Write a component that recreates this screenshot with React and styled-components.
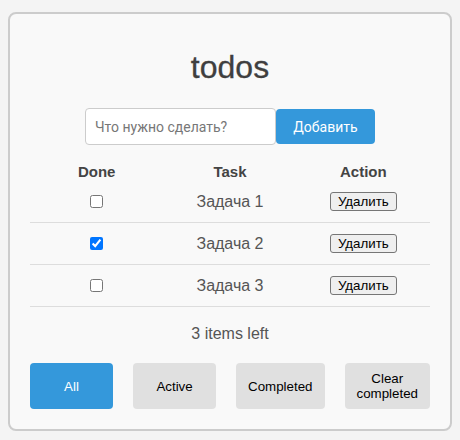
import React, { useState } from "react";
import styled, { createGlobalStyle } from "styled-components";

const Global = createGlobalStyle`
  html, body { margin: 0; padding: 0; background: #f4f4f4; }
  body { font-family: "Liberation Sans", Arial, sans-serif; }
`;

const Card = styled.div`
  box-sizing: border-box;
  width: 444px;
  margin: 12px auto 0;
  padding: 20px;
  background: #f9f9f9;
  border: 2px solid #cccccc;
  border-radius: 8px;
  display: flex;
  flex-direction: column;
`;

const Title = styled.h1`
  margin: 15px 0 0;
  font-size: 32px;
  line-height: 37px;
  font-weight: normal;
  color: #3f3f3f;
  text-align: center;
  -webkit-text-stroke: 0.3px #3f3f3f;
`;

const Form = styled.form`
  margin-top: 22px;
  display: flex;
  justify-content: center;
  align-items: center;
`;

const Input = styled.input`
  box-sizing: border-box;
  width: 191px;
  height: 37px;
  padding: 0 9px;
  border: 1px solid #cccccc;
  border-radius: 4px;
  background: #fff;
  font-family: Roboto, sans-serif;
  font-size: 14px;
  color: #333;
  outline: none;
  &::placeholder { color: #777; }
`;

const AddButton = styled.button`
  box-sizing: border-box;
  height: 35px;
  width: 99px;
  padding: 0;
  border: none;
  border-radius: 4px;
  background: #3498db;
  color: #fff;
  font-family: Roboto, sans-serif;
  font-size: 14px;
`;

const Table = styled.div`
  margin-top: 16px;
  display: grid;
  grid-template-columns: repeat(3, 1fr);
`;

const Head = styled.div`
  height: 20px;
  display: flex;
  align-items: center;
  justify-content: center;
  font-size: 15px;
  font-weight: bold;
  color: #444;
`;

const Cell = styled.div`
  height: 41px;
  border-bottom: 1px solid #dddddd;
  display: flex;
  align-items: center;
  justify-content: center;
  font-size: 16px;
  color: #555;
`;

const Check = styled.input`
  margin: 0;
  width: 13px;
  height: 13px;
`;

const DeleteButton = styled.button`
  padding: 1px 7px;
  border: 1px solid #767676;
  border-radius: 3px;
  background: #efefef;
  color: #000;
  font-family: "Liberation Sans", Arial, sans-serif;
  font-size: 13.33px;
  line-height: 15px;
`;

const Left = styled.div`
  margin-top: 18px;
  text-align: center;
  font-size: 16px;
  line-height: 18px;
  color: #555;
`;

const Filters = styled.div`
  margin-top: 20px;
  display: flex;
  gap: 20px;
`;

const Filter = styled.button`
  flex: 1;
  padding: 8px 12px;
  min-height: 46px;
  border: none;
  border-radius: 4px;
  background: ${(p) => (p.$active ? "#3498db" : "#e0e0e0")};
  color: ${(p) => (p.$active ? "#fff" : "#000")};
  font-family: "Liberation Sans", Arial, sans-serif;
  font-size: 13.33px;
  line-height: 15px;
`;

const initial = [
  { id: 1, text: "Задача 1", done: false },
  { id: 2, text: "Задача 2", done: true },
  { id: 3, text: "Задача 3", done: false },
];

export default function App() {
  const [todos, setTodos] = useState(initial);
  const toggle = (id) =>
    setTodos((t) => t.map((x) => (x.id === id ? { ...x, done: !x.done } : x)));
  return (
    <>
      <Global />
      <Card>
        <Title>todos</Title>
        <Form onSubmit={(e) => e.preventDefault()}>
          <Input placeholder="Что нужно сделать?" />
          <AddButton type="submit">Добавить</AddButton>
        </Form>
        <Table>
          <Head>Done</Head>
          <Head>Task</Head>
          <Head>Action</Head>
          {todos.map((t) => (
            <React.Fragment key={t.id}>
              <Cell>
                <Check type="checkbox" checked={t.done} onChange={() => toggle(t.id)} />
              </Cell>
              <Cell>{t.text}</Cell>
              <Cell>
                <DeleteButton type="button">Удалить</DeleteButton>
              </Cell>
            </React.Fragment>
          ))}
        </Table>
        <Left>3 items left</Left>
        <Filters>
          <Filter $active>All</Filter>
          <Filter>Active</Filter>
          <Filter>Completed</Filter>
          <Filter>Clear completed</Filter>
        </Filters>
      </Card>
    </>
  );
}
